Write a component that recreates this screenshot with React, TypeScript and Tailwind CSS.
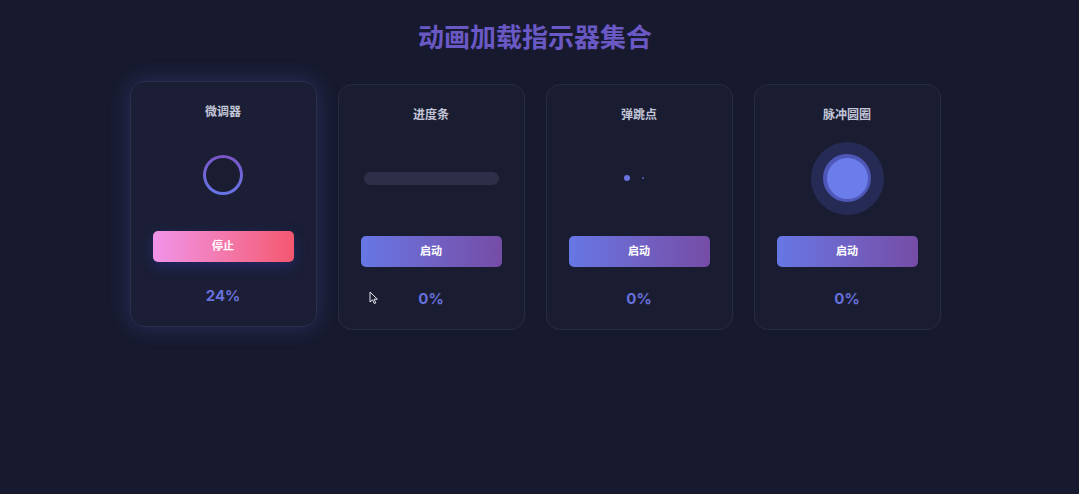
import React from "react";

const font = { fontFamily: 'Inter, "Noto Sans CJK SC", sans-serif' };

type Kind = "spinner" | "progress" | "dots" | "pulse";

interface LoaderCardProps {
  title: string;
  kind: Kind;
  running?: boolean;
  percent: number;
}

function Indicator({ kind }: { kind: Kind }) {
  if (kind === "spinner") {
    return (
      <div className="w-10 h-10 rounded-full p-[3px] bg-gradient-to-b from-[#7a55c8] to-[#6475e6]">
        <div className="w-full h-full rounded-full bg-[#1a1c32]" />
      </div>
    );
  }
  if (kind === "progress") {
    return <div className="w-[135px] h-[13px] rounded-full bg-[#2c2f47]" />;
  }
  if (kind === "dots") {
    return (
      <div className="flex items-center gap-[12px] pl-[4px]">
        <div className="w-[6px] h-[6px] rounded-full bg-[#6a72e0]" />
        <div className="w-[2px] h-[2px] rounded-full bg-[#5c63c8]" />
        <div className="w-[2px] h-[2px] rounded-full bg-transparent" />
      </div>
    );
  }
  return (
    <div className="w-[73px] h-[73px] rounded-full bg-[#262b55] flex items-center justify-center">
      <div className="w-[48px] h-[48px] rounded-full bg-[#4f58b8] flex items-center justify-center">
        <div className="w-[41px] h-[41px] rounded-full bg-[#6b7deb]" />
      </div>
    </div>
  );
}

function LoaderCard({ title, kind, running = false, percent }: LoaderCardProps) {
  return (
    <div
      className={
        running
          ? "w-[187px] rounded-[14px] border border-[#2a2e4a] bg-[#1b1e34] px-[22px] pt-[21px] pb-[19px] flex flex-col items-center -translate-y-[3px] shadow-[0_0_22px_rgba(90,100,220,0.28)]"
          : "w-[187px] rounded-[14px] border border-[#282b44] bg-[#1a1d32] px-[22px] pt-[21px] pb-[19px] flex flex-col items-center"
      }
    >
      <div className="text-[12px] leading-[18px] font-bold text-[#c3c6d8]">{title}</div>
      <div className="mt-[4px] h-[100px] w-full flex items-center justify-center">
        <Indicator kind={kind} />
      </div>
      <button
        className={
          running
            ? "mt-[6px] w-full h-[31px] rounded-[5px] text-[11px] font-bold text-white bg-gradient-to-r from-[#f093e8] to-[#f4576f] shadow-[0_4px_14px_rgba(40,50,140,0.6)]"
            : "mt-[8px] w-full h-[31px] rounded-[5px] text-[11px] font-bold text-white bg-gradient-to-r from-[#6677e4] to-[#754ca6]"
        }
      >
        {running ? "停止" : "启动"}
      </button>
      <div className={running ? "mt-[23px] text-[15px] leading-[22px] font-bold text-[#6870dc]" : "mt-[21px] text-[15px] leading-[22px] font-bold text-[#6870dc]"}>
        {percent}%
      </div>
    </div>
  );
}

export default function App() {
  return (
    <div className="min-h-[494px] w-full bg-[#171a2e] pr-[9px]" style={font}>
      <h1 className="pt-[21px] text-center text-[26px] leading-[34px] font-bold text-[#6a58c4]">
        动画加载指示器集合
      </h1>
      <div className="mt-[29px] flex justify-center gap-[21px]">
        <LoaderCard title="微调器" kind="spinner" running percent={24} />
        <div className="relative">
          <LoaderCard title="进度条" kind="progress" percent={0} />
          <svg
            className="absolute left-[31px] top-[207px]"
            width="10"
            height="14"
            viewBox="0 0 10 14"
          >
            <path d="M1 1 L1 11 L3.5 8.8 L5.3 12.6 L6.8 11.9 L5 8.2 L8.4 8.2 Z" fill="#1b1e33" stroke="#e6e6ee" strokeWidth="1" />
          </svg>
        </div>
        <LoaderCard title="弹跳点" kind="dots" percent={0} />
        <LoaderCard title="脉冲圆圈" kind="pulse" percent={0} />
      </div>
    </div>
  );
}
